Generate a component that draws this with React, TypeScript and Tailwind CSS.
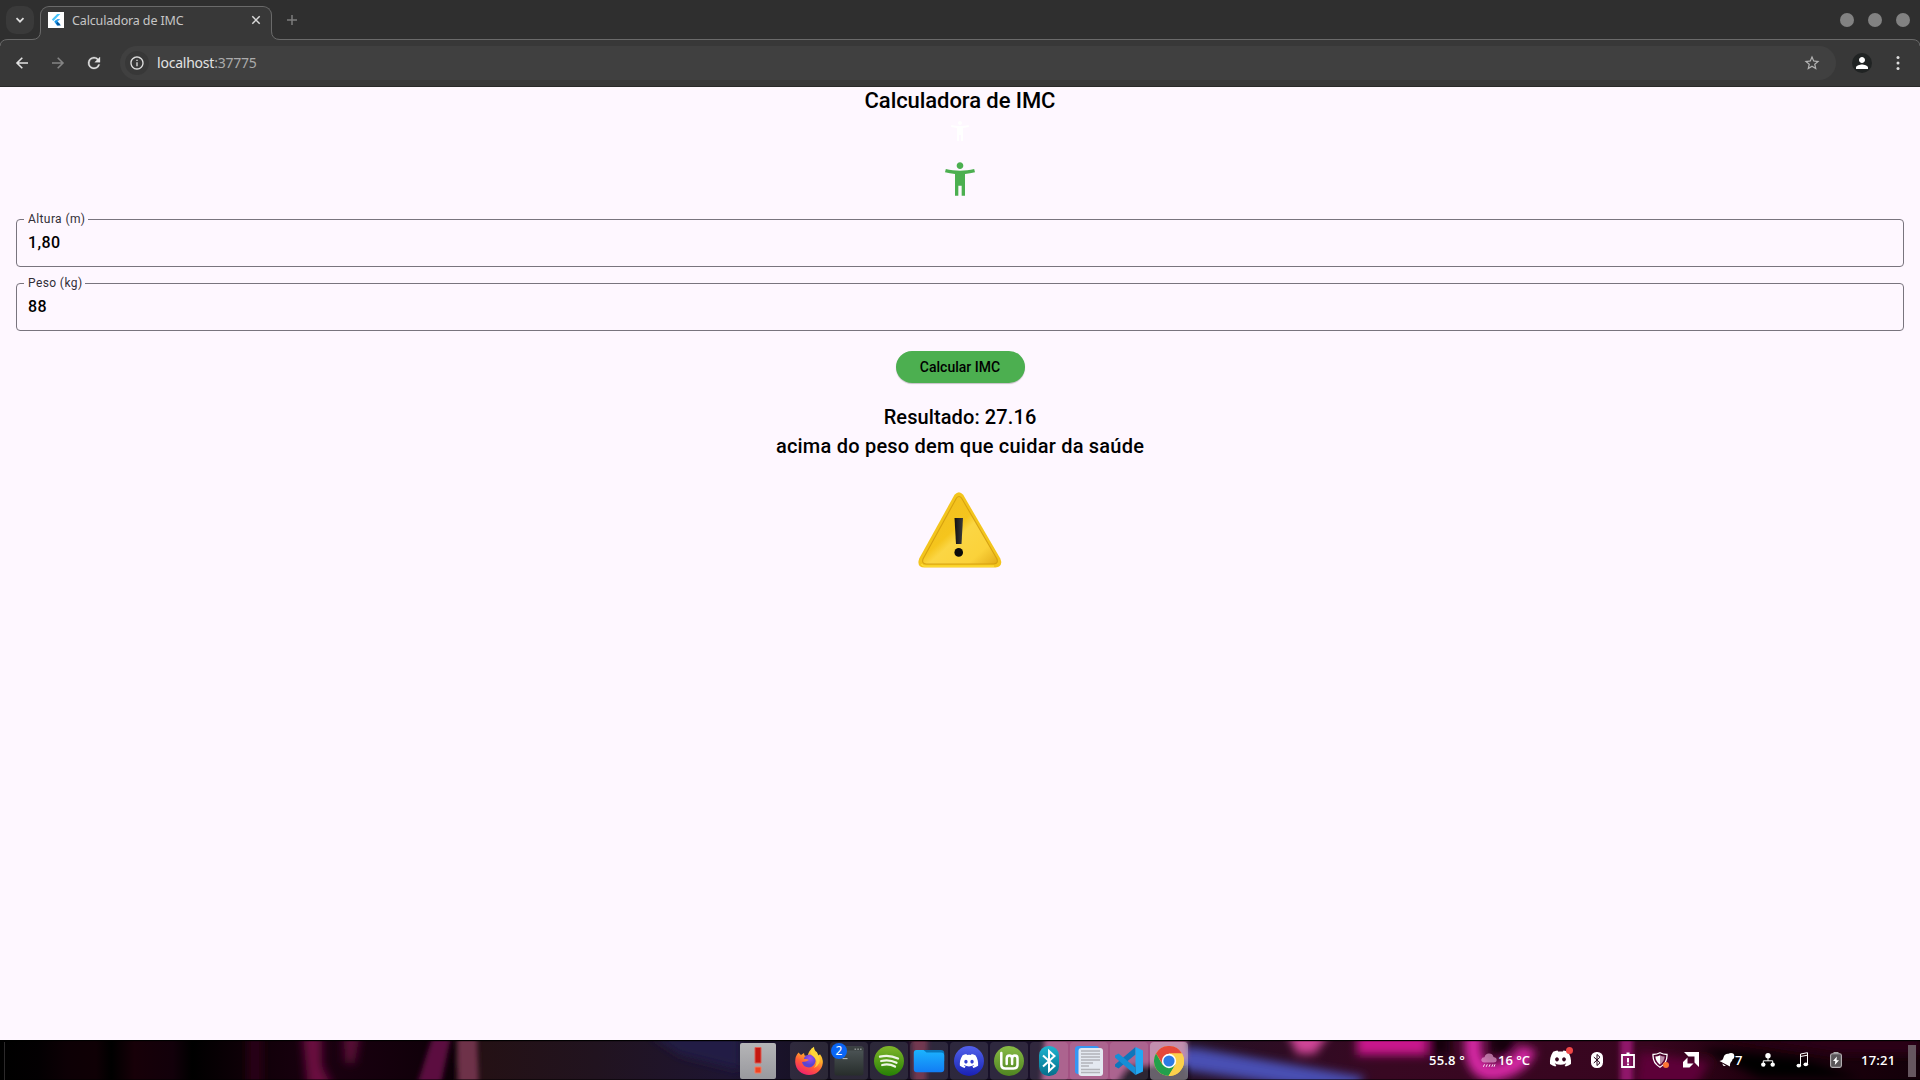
import type { ReactNode } from "react";
import { MdAccessibilityNew, MdPerson, MdStarBorder, MdInfoOutline } from "react-icons/md";
import { FaDiscord } from "react-icons/fa";

function FlutterLogo() {
  return (
    <span className="block h-4 w-4 bg-white">
      <svg viewBox="0 0 16 16" className="h-4 w-4">
        <path d="M9.2 2h3.1L5.4 8.9 3.8 7.4z" fill="#47c5fb" />
        <path d="M9.2 6.9h3.1L9.6 9.6 12.3 12.3 9.2 14 6.3 9.8z" fill="#47a8f0" />
        <path d="M7.9 11.2 9.5 9.7l3.1 3.2v.7H9.9z" fill="#00569e" />
        <path d="M6.4 9.7 8 8.1l1.6 1.6L8 11.3z" fill="#1595e8" />
      </svg>
    </span>
  );
}

function TabStrip() {
  return (
    <div className="flex h-10 items-start border-b border-[#6a6a6a] bg-[#2f2f2f]">
      <div className="ml-1.5 mt-1.5 flex h-7 w-7 items-center justify-center rounded-[10px] bg-[#3a3a3a]">
        <svg viewBox="0 0 10 10" className="h-2.5 w-2.5">
          <path d="M1.5 3.2 5 6.7 8.5 3.2" stroke="#dedede" strokeWidth="1.7" fill="none" />
        </svg>
      </div>
      <div className="relative ml-1.5 mt-1.5 flex h-[34px] w-[232px] items-center rounded-t-[9px] border border-b-0 border-[#6a6a6a] bg-[#383838] pb-[7px] pl-[7px] pr-[10px]">
        <svg viewBox="0 0 9 9" className="absolute -left-[9px] bottom-0 h-[9px] w-[9px]">
          <path d="M0 9V8.5Q8.5 8.5 8.5 0H9V9Z" fill="#383838" />
          <path d="M0 8.5Q8.5 8.5 8.5 0" stroke="#6a6a6a" fill="none" />
        </svg>
        <svg viewBox="0 0 9 9" className="absolute -right-[9px] bottom-0 h-[9px] w-[9px]">
          <path d="M9 9V8.5Q.5 8.5 .5 0H0V9Z" fill="#383838" />
          <path d="M9 8.5Q.5 8.5 .5 0" stroke="#6a6a6a" fill="none" />
        </svg>
        <FlutterLogo />
        <span className="ml-2 pt-px font-['Noto_Sans'] text-[12.5px] leading-4 tracking-[-0.14px] text-[#c6c6c6]">Calculadora de IMC</span>
        <svg viewBox="0 0 10 10" className="ml-auto h-2.5 w-2.5">
          <path d="M1.3 1.3l7.4 7.4M8.7 1.3L1.3 8.7" stroke="#dadada" strokeWidth="1.5" />
        </svg>
      </div>
      <svg viewBox="0 0 12 12" className="ml-[14px] mt-[14px] h-3 w-3">
        <path d="M6 1v10M1 6h10" stroke="#7d7d7d" strokeWidth="1.5" />
      </svg>
      <div className="ml-auto mr-[10.500px] mt-[13px] flex gap-[14px]">
        <span className="h-3.5 w-3.5 rounded-full bg-[#828282]" />
        <span className="h-3.5 w-3.5 rounded-full bg-[#828282]" />
        <span className="h-3.5 w-3.5 rounded-full bg-[#828282]" />
      </div>
    </div>
  );
}

function Toolbar() {
  return (
    <div className="relative flex h-[47px] items-center border-b border-[#292929] bg-[#383838] pb-px">
      <svg viewBox="0 0 8 8" className="absolute -top-px left-0 h-2 w-2">
        <path d="M0 0H8V.5Q.5 .5 0 7Z" fill="#2f2f2f" />
        <path d="M8 .5Q.5 .5 0 7" stroke="#6a6a6a" fill="none" />
      </svg>
      <svg viewBox="0 0 8 8" className="absolute -top-px right-0 h-2 w-2">
        <path d="M8 0H0V.5Q7.5 .5 8 7Z" fill="#2f2f2f" />
        <path d="M0 .5Q7.5 .5 8 7" stroke="#6a6a6a" fill="none" />
      </svg>
      <svg viewBox="0 0 12 12" className="ml-4 h-3 w-3 overflow-visible">
        <path d="M12 6H1M6.3.7 1 6l5.3 5.3" stroke="#e2e2e2" strokeWidth="1.6" fill="none" />
      </svg>
      <svg viewBox="0 0 12 12" className="ml-6 h-3 w-3 overflow-visible">
        <path d="M0 6h11M5.7.7 11 6l-5.3 5.3" stroke="#848484" strokeWidth="1.6" fill="none" />
      </svg>
      <svg viewBox="4 4 16 16" className="ml-6 h-3 w-3 overflow-visible">
        <path
          d="M17.65 6.35A7.96 7.96 0 0 0 12 4a8 8 0 1 0 7.73 10h-2.08A6 6 0 1 1 12 6c1.66 0 3.14.69 4.22 1.78L13 11h7V4z"
          fill="#e2e2e2" stroke="#e2e2e2" strokeWidth=".4"
        />
      </svg>
      <div className="ml-5 flex h-[34px] w-[1716px] items-center rounded-full bg-[#404040] pl-[5px] pr-[15px]">
        <span className="flex h-6 w-6 items-center justify-center rounded-full bg-[#383838]">
          <MdInfoOutline size={16} color="#dedede" />
        </span>
        <span className="ml-2 font-['Noto_Sans'] text-[14px] leading-5 tracking-[-0.22px] text-[#e3e3e3]">
          localhost<span className="text-[#ababab]">:37775</span>
        </span>
        <MdStarBorder size={18} color="#b4b4b4" className="ml-auto" />
      </div>
      <span className="ml-4 flex h-5 w-5 items-center justify-center rounded-full bg-[#202323]">
        <MdPerson size={18} color="#fff" />
      </span>
      <svg viewBox="0 0 4 14" className="ml-6 h-3.5 w-1">
        <circle cx="2" cy="1.6" r="1.5" fill="#dedede" />
        <circle cx="2" cy="7" r="1.5" fill="#dedede" />
        <circle cx="2" cy="12.4" r="1.5" fill="#dedede" />
      </svg>
    </div>
  );
}

function Field({ label, value }: { label: string; value: string }) {
  return (
    <fieldset className="h-[54px] rounded-[4px] border border-[#79747e] pl-[7px]">
      <legend className="h-3 pl-1 pr-[3px] text-[12px] leading-3 tracking-[0.4px] text-[#322f37]">{label}</legend>
      <div className="pl-1 pt-[6px] text-[16px] font-medium leading-6 tracking-[0.4px] text-black">{value}</div>
    </fieldset>
  );
}

function WarningSign() {
  return (
    <svg viewBox="0 0 84 76" className="mt-[31px] h-[76px] w-[84px]">
      <defs>
        <linearGradient id="signFace" x1="0" y1="0" x2="1" y2="1">
          <stop offset="0" stopColor="#efbd22" />
          <stop offset=".45" stopColor="#f5c51d" />
          <stop offset=".54" stopColor="#fbd644" />
          <stop offset=".8" stopColor="#fbd23a" />
          <stop offset="1" stopColor="#e3ac18" />
        </linearGradient>
        <linearGradient id="mark" x1="0" x2="1">
          <stop offset="0" stopColor="#111" />
          <stop offset="1" stopColor="#3b3c3c" />
        </linearGradient>
      </defs>
      <path d="M36.5 2.8Q41 -2.2 45.2 2.8L82.3 66.5Q85.5 74.5 77.5 75.5H6.5Q-1.7 75 1.2 66.5Z" fill="#f3c51d" />
      <path d="M38.500 6Q41 3 43.500 6L79 67Q80.500 71.500 76 72H8Q3.500 71.500 5 67Z" fill="url(#signFace)" stroke="#cf980d" strokeWidth="1.1" strokeOpacity=".8" />
      <path d="M3.500 72Q4.500 74.200 8 74.200H76" stroke="#ffdf38" strokeWidth="1.2" fill="none" />
      <path d="M36.5 26H45L43.5 52H38Z" fill="url(#mark)" />
      <circle cx="40.7" cy="60.4" r="4.3" fill="#0b0b0b" />
    </svg>
  );
}

function Page() {
  return (
    <main className="flex h-[953px] flex-col items-center bg-[#fef7ff] font-[Roboto] text-black">
      <h1 className="mt-px text-[22px] font-medium leading-[26px] tracking-[-0.07px]">Calculadora de IMC</h1>
      <MdAccessibilityNew size={24} color="#fff" className="mt-[5px]" />
      <MdAccessibilityNew size={40} color="#4caf50" className="mt-4" />
      <div className="mt-[14px] flex w-full flex-col gap-[10px] px-4">
        <Field label="Altura (m)" value="1,80" />
        <Field label="Peso (kg)" value="88" />
      </div>
      <button className="mt-5 h-8 w-[129px] rounded-full bg-[#4caf50] text-[14px] font-medium leading-5 tracking-[0.02px] shadow-[0_1px_1px_rgba(0,0,0,0.22)]">
        Calcular IMC
      </button>
      <p className="mt-5 text-center text-[20px] font-medium leading-[29px] tracking-[0.22px]">
        <span className="tracking-[0.1px]">Resultado: 27.16</span>
        <br />
        acima do peso dem que cuidar da saúde
      </p>
      <WarningSign />
    </main>
  );
}

function Wallpaper() {
  return (
    <svg viewBox="0 0 1920 40" preserveAspectRatio="none" className="absolute inset-0 h-10 w-full">
      <defs>
        <linearGradient id="wall" x1="0" x2="1">
          <stop offset="0" stopColor="#000" />
          <stop offset=".02" stopColor="#030002" />
          <stop offset=".035" stopColor="#0d0005" />
          <stop offset=".05" stopColor="#0f0005" />
          <stop offset=".058" stopColor="#000" />
          <stop offset=".07" stopColor="#170008" />
          <stop offset=".09" stopColor="#12000a" />
          <stop offset=".1" stopColor="#000" />
          <stop offset=".13" stopColor="#100008" />
          <stop offset=".17" stopColor="#1a0010" />
          <stop offset=".235" stopColor="#0e0008" />
          <stop offset=".252" stopColor="#241115" />
          <stop offset=".31" stopColor="#21131f" />
          <stop offset=".38" stopColor="#1e1532" />
          <stop offset=".43" stopColor="#151021" />
          <stop offset=".52" stopColor="#171029" />
          <stop offset=".62" stopColor="#251024" />
          <stop offset=".72" stopColor="#380822" />
          <stop offset=".86" stopColor="#38051f" />
          <stop offset=".91" stopColor="#22000f" />
          <stop offset="1" stopColor="#130009" />
        </linearGradient>
        <filter id="soft" filterUnits="userSpaceOnUse" x="0" y="-30" width="1920" height="100">
          <feGaussianBlur stdDeviation="5" />
        </filter>
        <filter id="edge" filterUnits="userSpaceOnUse" x="0" y="-30" width="1920" height="100">
          <feGaussianBlur stdDeviation="2.5" />
        </filter>
      </defs>
      <rect width="1920" height="40" fill="url(#wall)" />
      <g filter="url(#soft)">
        <path d="M248-15h14v70h-14z" fill="#2c0018" />
        <path d="M302-10h20v35l12 25h-26z" fill="#6b0740" />
        <path d="M343-10h18l-6 33h-10z" fill="#5b0838" />
        <path d="M650-5l90-10v45l-60-15z" fill="#201a45" />
        <path d="M1175 8l20 0 170 29-10 12-60-3-110-16z" fill="#4a50b4" />
        <path d="M1285-12h48l-18 26h-18z" fill="#d04597" />
        <path d="M1357-12h70v27h-70z" fill="#c8188c" />
        <path d="M1474-10q-6 44 22 42 26-6 32-24" fill="none" stroke="#d326a2" strokeWidth="17" />
        <ellipse cx="1502" cy="4" rx="13" ry="11" fill="#12000c" />
        <path d="M1430-8h20v24h-20z" fill="#12000c" />
        <path d="M1640 12l70 10-15 25h-60z" fill="#5d0038" />
        <path d="M1710-5h210v20l-80 0z" fill="#2a0018" />
        <path d="M1700 8l100 10 60 20h-100z" fill="#050003" />
      </g>
      <g filter="url(#edge)">
        <path d="M434-8h18l-12 56h-24z" fill="#5c1040" />
        <path d="M464-8h-7l-3 58h9z" fill="#15100f" />
        <path d="M457-8h20l2 58h-20z" fill="#6e3148" />
        <path d="M911-8h17l-2 58h-12z" fill="#63203d" />
        <path d="M1045-8h142v28l-60 8-14 20h-72z" fill="#a35383" />
        <path d="M1114 50l18-25 56 2v25z" fill="#19101c" />
        <path d="M1620-8h13v58h-13z" fill="#90166b" />
      </g>
      <rect width="1920" height="1.2" fill="#000" />
      <rect y="39" width="1920" height="1" fill="#000" opacity=".5" />
    </svg>
  );
}

function FirefoxIcon() {
  return (
    <svg viewBox="0 0 30 30" className="h-[30px] w-[30px]">
      <defs>
        <linearGradient id="fox" x1=".8" y1="0" x2=".3" y2="1">
          <stop offset="0" stopColor="#fff044" />
          <stop offset=".35" stopColor="#ffb12a" />
          <stop offset=".65" stopColor="#ff5a38" />
          <stop offset="1" stopColor="#f01d70" />
        </linearGradient>
        <radialGradient id="globe" cx=".6" cy=".3">
          <stop offset="0" stopColor="#a050f0" />
          <stop offset="1" stopColor="#5945d0" />
        </radialGradient>
      </defs>
      <path d="M4.5 6.5 7 9l3-2 .5 2.5 3 .5Q15 4 20 .8q0 3.500 3 5.500l1 3.500 2-1.500Q29 12 28.800 17C28 24.500 22 29 15 29S1.500 24 1.200 16Q1 10 4.500 6.500Z" fill="url(#fox)" />
      <path d="M10 13q0-4 6-4.500 6 2 5.500 7Q20 21 15 21.500 9 21 8 16l4-.5 3-1.500q-2-1.500-5-1Z" fill="url(#globe)" />
      <path d="M18 2q-3 6 2 9 5 5 0 11 8-4 5-12l-2-3-3-1Z" fill="#ffd83a" opacity=".85" />
    </svg>
  );
}

function TerminalIcon() {
  return (
    <span className="relative flex">
      <svg viewBox="0 0 30 30" className="h-[30px] w-[30px]">
        <defs>
          <linearGradient id="term" x1="0" y1="0" x2="0" y2="1">
            <stop offset="0" stopColor="#50585a" />
            <stop offset="1" stopColor="#272d2b" />
          </linearGradient>
        </defs>
        <rect x=".5" y=".5" width="29" height="29" rx="2" fill="url(#term)" />
        <path d="M1 4.500V2.500Q1 .5 3 .5H27Q29.500 .5 29.500 2.500V4.500Z" fill="#3a4041" />
        <path d="M20.500 2.500h1.600v1.600h-1.600zM23.300 2.500h1.600v1.600h-1.600zM26 2.500h1.600v1.600H26z" fill="#8b9090" />
        <path d="M8.500 12.600h5" stroke="#bfc3c3" />
      </svg>
      <span className="absolute -left-[3px] -top-[3px] flex h-4 w-4 items-center justify-center rounded-full bg-[#0a66f5] font-['Noto_Sans'] text-[12px] leading-none text-white">2</span>
    </span>
  );
}

function SpotifyIcon() {
  return (
    <svg viewBox="0 0 30 30" className="h-[30px] w-[30px]">
      <defs>
        <linearGradient id="spot" x1="0" y1="0" x2="0" y2="1">
          <stop offset="0" stopColor="#80b62a" />
          <stop offset="1" stopColor="#268005" />
        </linearGradient>
      </defs>
      <circle cx="15" cy="15" r="15" fill="url(#spot)" />
      <path d="M6 10.700q9-2.500 18 1.800M7.200 15q8-2 15.300 1.800M8.200 19q7-1.600 12.800 1.600" stroke="#eef5e4" strokeWidth="2.300" strokeLinecap="round" fill="none" />
    </svg>
  );
}

function FolderIcon() {
  return (
    <svg viewBox="0 0 30 30" className="h-[30px] w-[30px] overflow-visible">
      <defs>
        <linearGradient id="fold" x1="0" y1="0" x2="0" y2="1">
          <stop offset="0" stopColor="#1bb4ff" />
          <stop offset="1" stopColor="#127cf4" />
        </linearGradient>
      </defs>
      <path d="M8 4h19q3.200 0 3.200 3v8H8z" fill="#0877bd" />
      <path d="M2 4h7.500l3 2.500H27q3.200 0 3.200 3V23q0 3.200-3.200 3.200H2.800Q-.2 26.200-.2 23V6.500Q-.2 4 2 4Z" fill="url(#fold)" />
    </svg>
  );
}

function DiscordIcon() {
  return (
    <span className="flex h-[30px] w-[30px] items-center justify-center rounded-full bg-linear-to-b from-[#5361ec] to-[#1a1fb4]">
      <FaDiscord size={20} color="#fff" />
    </span>
  );
}

function MintIcon() {
  return (
    <svg viewBox="0 0 30 30" className="h-[30px] w-[30px]">
      <defs>
        <linearGradient id="mint" x1="0" y1="0" x2="0" y2="1">
          <stop offset="0" stopColor="#88bb45" />
          <stop offset="1" stopColor="#4f8421" />
        </linearGradient>
      </defs>
      <circle cx="15" cy="15" r="15" fill="url(#mint)" />
      <path d="M7.300 7v11.500q0 4 4 4h8.200q4 0 4-4V12.500q0-3-2.700-3t-2.700 3V18M18.100 12.500q0-3-2.700-3t-2.700 3V18" stroke="#fff" strokeWidth="2.500" fill="none" strokeLinecap="round" />
    </svg>
  );
}

function BluetoothIcon() {
  return (
    <svg viewBox="0 0 20 30" className="h-[30px] w-5">
      <defs>
        <linearGradient id="bt" x1="0" y1="0" x2="0" y2="1">
          <stop offset="0" stopColor="#20b4d0" />
          <stop offset="1" stopColor="#056f8b" />
        </linearGradient>
      </defs>
      <rect width="20" height="30" rx="9.500" fill="url(#bt)" />
      <path d="M4 9.500 15.500 20 10 25V5l5.500 5L4 20.500" stroke="#fff" strokeWidth="2" fill="none" />
    </svg>
  );
}

function NotesIcon() {
  return (
    <svg viewBox="0 0 28 30" className="h-[30px] w-7">
      <rect x="0" y="0" width="24" height="28" rx="3" fill="#3796f2" />
      <rect x="3.500" y="2" width="24.500" height="28" rx="3" fill="#e4e9f1" />
      <path d="M6 5h19M6 8h19M6 11h19M6 14h19M6 17h12M6 20h8M6 23.500h19M6 26.500h19" stroke="#b1b3b9" strokeWidth="1.500" />
    </svg>
  );
}

function CodeIcon() {
  return (
    <svg viewBox="0 0 28 28" className="h-7 w-7">
      <path d="M20.500 0v7.500L3.500 21.500 0 19.500v-2z" fill="#0e76bb" />
      <path d="M20.500 28v-7.500L3.500 6.500 0 8.500v2z" fill="#168ed6" />
      <path d="M20.500 0 28 3.500v21L20.500 28z" fill="#22a7f2" />
    </svg>
  );
}

function ChromeIcon() {
  return (
    <svg viewBox="0 0 30 30" className="h-[30px] w-[30px]">
      <circle cx="15" cy="15" r="15" fill="#fbd04b" />
      <path d="M15 15 8.900 18.500 2 7.500A15 15 0 0 1 28 7.500H15Z" fill="#e5483b" />
      <path d="M2 7.500A15 15 0 0 0 14.500 30L21.500 18.500 15 15 8.500 18.700Z" fill="#22a04c" />
      <path d="M14.500 30 21.500 18.500 21.500 11.200 15 8V7.500H28A15 15 0 0 1 14.500 30Z" fill="#fbd04b" />
      <circle cx="15" cy="15" r="7.200" fill="#fff" />
      <circle cx="15" cy="15" r="5.600" fill="#2c7be5" />
    </svg>
  );
}

function DockItem({ children, active = false }: { children: ReactNode; active?: boolean }) {
  return (
    <span
      className={
        active
          ? "flex h-[38px] w-[38px] items-center justify-center rounded-[4px] bg-white/35"
          : "flex h-[38px] w-[38px] items-center justify-center rounded-[4px] bg-white/10"
      }
    >
      {children}
    </span>
  );
}

function Tray() {
  return (
    <div className="ml-auto flex h-[39px] items-center font-['Open_Sans'] text-[13px] font-semibold leading-4 text-white">
      <span className="w-[35px] whitespace-nowrap pb-px tracking-[0.2px]">55.8 °</span>
      <svg viewBox="0 0 16 15" className="ml-[17px] mb-px h-[15px] w-4">
        <path d="M3.500 9.500Q0 9 .3 6.500 1 4 3.500 4.200 4.500 .5 8 .6q3.700 0 4.500 3.400 3.300.5 3.200 3-.2 2.500-3 2.500Z" fill="#e6a4d3" opacity=".65" />
        <path d="M3.500 11.300 2.400 13.800M6.300 11.300l-1.100 2.500M9.100 11.300 8 13.800M11.900 11.300l-1.100 2.500M14 11.300l-1 2.500" stroke="#fbe7f5" />
      </svg>
      <span className="ml-px w-8 whitespace-nowrap pb-px">16 °C</span>
      <span className="relative mb-1 ml-[19px] flex">
        <FaDiscord size={23} color="#fff" />
        <span className="absolute -right-px top-0 h-[7px] w-[7px] rounded-full bg-[#f04747]" />
      </span>
      <svg viewBox="0 0 12 16" className="mb-[2px] ml-[19px] h-4 w-3">
        <rect width="12" height="16" rx="5.500" fill="#fff" />
        <path d="M2.800 5 9 10.800 6 13.500V2.500l3 2.700L2.800 11" stroke="#26051b" fill="none" />
      </svg>
      <svg viewBox="0 0 14 16" className="mb-[2px] ml-[18px] h-4 w-3.5">
        <path d="M1 3h12v12H1z" stroke="#fff" strokeWidth="1.800" fill="none" />
        <path d="M4 4V2h1.500V.5h3V2H10v2z" fill="#fff" />
        <path d="M6 6h2v4.500H6zM6 11.500h2v1.700H6z" fill="#fff" />
      </svg>
      <span className="relative mb-[2px] ml-[17px] flex">
        <svg viewBox="0 0 16 16" className="h-4 w-4">
          <path d="M8 .8Q11 2.500 15 2.500 15.500 11 8 15.200.5 11 1 2.500 5 2.500 8 .8Z" stroke="#fff" strokeWidth="1.300" fill="none" />
          <path d="M8 3.300Q5.800 4.400 3.300 4.600 3.600 9.500 8 12.700Z" fill="#fff" />
          <path d="M8 3.300q2.200 1.100 4.700 1.300Q12.400 9.500 8 12.700Z" fill="#b98ca7" />
        </svg>
        <span className="absolute -right-px bottom-0 h-[6px] w-[6px] rounded-full bg-[#fb7434]" />
      </span>
      <svg viewBox="0 0 16 16" className="mb-[2px] ml-[15px] h-4 w-4">
        <path d="M1 0H16v15L11.500 10.500V4.500H5.500zM4.500 5.500V11.500H10.500L6.500 15.500H0V10z" fill="#fff" />
      </svg>
      <svg viewBox="0 0 16 16" className="mb-[2px] ml-5 h-4 w-4">
        <path d="M9.500 1.800Q5.500 1.500 4.500 5.500 4 8.500.5 9L11 14.500q-.5-3.500 2-5.500l.5-2Z" fill="#fff" />
        <path d="M3.500 11.500q0 3 3.500 2.500z" fill="#fff" />
        <circle cx="12" cy="4.200" r="3.300" fill="#fff" />
      </svg>
      <span className="w-[7px] pb-px">7</span>
      <svg viewBox="0 0 14 14" className="mb-[2px] ml-[19px] h-3.5 w-3.5">
        <circle cx="7" cy="2.700" r="2.700" fill="#fff" />
        <path d="M7 4v3.800M2.300 11V7.800h9.400V11" stroke="#fff" fill="none" />
        <circle cx="2.300" cy="11.600" r="2.200" fill="#fff" />
        <circle cx="11.700" cy="11.600" r="2.200" fill="#fff" />
      </svg>
      <svg viewBox="0 0 13 16" className="mb-[2px] ml-[21px] h-4 w-[13px]">
        <path d="M4.500 13.500V2l7-1.300v11.500M4.500 4.500l7-1.300" stroke="#fff" fill="none" />
        <ellipse cx="2.800" cy="13.600" rx="2.300" ry="1.900" fill="#fff" />
        <ellipse cx="9.800" cy="12.300" rx="2.300" ry="1.900" fill="#fff" />
      </svg>
      <svg viewBox="0 0 12 16" className="mb-[2px] ml-[21px] h-4 w-3">
        <path d="M3.500 0h5v1.500h-5z" fill="#aaa" />
        <rect x=".6" y="1.800" width="10.800" height="13.600" rx="1.800" fill="#5a5659" stroke="#b8b4b7" strokeWidth="1.100" />
        <path d="M6.800 4.500 3 9h2.300l-.5 4L9 8.300H6.600z" fill="#fff" />
      </svg>
      <span className="ml-[19px] w-[34px] pb-px tracking-[0.2px]">17:21</span>
      <span className="ml-[13px] mr-1 h-8 w-2 bg-[#66565f]" />
    </div>
  );
}

function Taskbar() {
  return (
    <footer className="relative h-10 bg-black">
      <Wallpaper />
      <div className="relative flex h-10 items-center pt-px">
        <span className="ml-1 h-[38px] w-px bg-[#2b292a]" />
        <span className="ml-[735px] flex h-9 w-9 items-center justify-center rounded-[2px] bg-linear-to-b from-[#b5b5b7] to-[#99999e]">
          <svg viewBox="0 0 8 27" className="h-[27px] w-2">
            <path d="M1 .5h6v15.500H1z" fill="#c51710" stroke="#df5c50" />
            <path d="M1 20h6v6H1z" fill="#f04422" stroke="#f27b62" />
          </svg>
        </span>
        <div className="ml-[14px] flex gap-[2px]">
          <DockItem><FirefoxIcon /></DockItem>
          <DockItem><TerminalIcon /></DockItem>
          <DockItem><SpotifyIcon /></DockItem>
          <DockItem><FolderIcon /></DockItem>
          <DockItem><DiscordIcon /></DockItem>
          <DockItem><MintIcon /></DockItem>
          <DockItem><BluetoothIcon /></DockItem>
          <DockItem><NotesIcon /></DockItem>
          <DockItem><CodeIcon /></DockItem>
          <DockItem active><ChromeIcon /></DockItem>
        </div>
        <Tray />
      </div>
    </footer>
  );
}

export default function App() {
  return (
    <div className="h-[1080px] w-[1920px] overflow-hidden bg-[#fef7ff]">
      <TabStrip />
      <Toolbar />
      <Page />
      <Taskbar />
    </div>
  );
}
